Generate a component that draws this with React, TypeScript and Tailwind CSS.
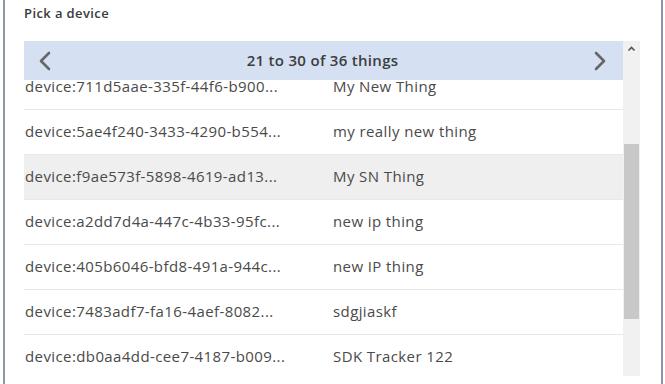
import React from "react";

const rows: [string, string][] = [
  ["device:711d5aae-335f-44f6-b900...", "My New Thing"],
  ["device:5ae4f240-3433-4290-b554...", "my really new thing"],
  ["device:f9ae573f-5898-4619-ad13...", "My SN Thing"],
  ["device:a2dd7d4a-447c-4b33-95fc...", "new ip thing"],
  ["device:405b6046-bfd8-491a-944c...", "new IP thing"],
  ["device:7483adf7-fa16-4aef-8082...", "sdgjiaskf"],
  ["device:db0aa4dd-cee7-4187-b009...", "SDK Tracker 122"],
];

export default function App() {
  return (
    <div
      className="w-[665px] h-[384px] bg-white overflow-hidden"
      style={{ fontFamily: '"Open Sans", "Noto Sans", sans-serif' }}
    >
      <div className="ml-[3px] w-[660px] h-[384px] border-l-2 border-r-2 border-[#8d95ab] pl-[19px]">
        <div className="h-[41px] pt-[4px] text-[13px] font-semibold text-[#3a3a3a] tracking-[0.4px]">
          Pick a device
        </div>
        <div className="flex w-[616px] h-[335px]">
          <div className="w-[599px] h-full flex flex-col overflow-hidden">
            <div className="h-[39px] shrink-0 bg-[#d5e1f2] flex items-center justify-between pl-[13px] pr-[15px] relative z-10">
              <svg width="16" height="20" viewBox="0 0 16 20">
                <path d="M12 2 L4 10 L12 18" fill="none" stroke="#666" strokeWidth="2.6" strokeLinecap="round" strokeLinejoin="round" />
              </svg>
              <span className="text-[15px] font-semibold text-[#3d3d3d] tracking-[0.3px]">21 to 30 of 36 things</span>
              <svg width="16" height="20" viewBox="0 0 16 20">
                <path d="M4 2 L12 10 L4 18" fill="none" stroke="#666" strokeWidth="2.6" strokeLinecap="round" strokeLinejoin="round" />
              </svg>
            </div>
            <div className="flex-1 overflow-hidden">
              <div className="mt-[-15px]">
                {rows.map(([id, name], i) => (
                  <div
                    key={id}
                    className={`h-[45px] flex items-center pb-[2px] border-b border-[#e8e8e8] text-[15px] text-[#4a4a4a] tracking-[0.4px] ${i === 2 ? "bg-[#efefef]" : ""}`}
                  >
                    <div className="w-[309px] pl-[1px] whitespace-nowrap">{id}</div>
                    <div className="whitespace-nowrap">{name}</div>
                  </div>
                ))}
              </div>
            </div>
          </div>
          <div className="w-[17px] h-full bg-[#f1f1f1] flex flex-col items-center">
            <svg width="9" height="6" viewBox="0 0 9 6" className="mt-[5px]">
              <path d="M1.5 4.5 L4.5 1.5 L7.5 4.5" fill="none" stroke="#555" strokeWidth="1.6" />
            </svg>
            <div className="mt-[92px] w-[15px] h-[175px] bg-[#c8c8c8]" />
          </div>
        </div>
      </div>
    </div>
  );
}
